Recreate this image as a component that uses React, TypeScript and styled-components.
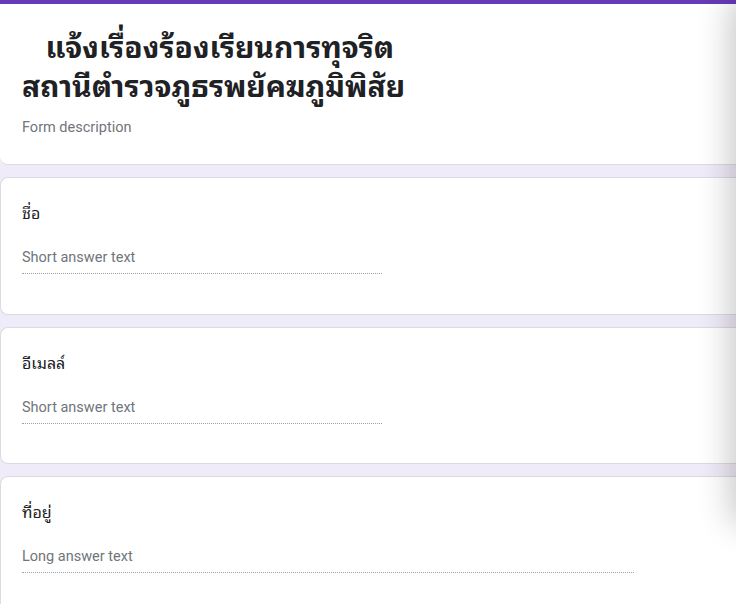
import React from "react";
import styled, { createGlobalStyle } from "styled-components";

const Global = createGlobalStyle`
  html, body {
    margin: 0;
    padding: 0;
    background: #f0ebf8;
    overflow: hidden;
  }
  body {
    font-family: Roboto, "Noto Sans Thai", "Noto Sans", "DejaVu Sans", sans-serif;
  }
`;

const thaiStack = `"Noto Sans Thai Looped", Loma, Garuda, "Noto Sans Thai", "Noto Sans", "DejaVu Sans", sans-serif`;

const Page = styled.div`
  position: relative;
  width: 736px;
  height: 604px;
  overflow: hidden;
  display: flex;
  flex-direction: column;
  gap: 12px;
`;

const Card = styled.section<{ $header?: boolean }>`
  width: 780px;
  box-sizing: border-box;
  background: #ffffff;
  border: 1px solid #dadce0;
  border-right: none;
  border-radius: 8px;
  ${(p) => (p.$header ? "border-top: 4px solid #673ab7; border-radius: 0 0 8px 8px; border-left: none;" : "")}
  padding: ${(p) => (p.$header ? "21px 22px 26px" : "22px 22px 39.5px 21px")};
  display: flex;
  flex-direction: column;
`;

const Title = styled.h1`
  margin: 0;
  font-family: ${thaiStack};
  font-size: 30px;
  font-weight: 700;
  line-height: 39px;
  color: #202124;
  white-space: pre-wrap;
`;

const Description = styled.div`
  margin-top: 15px;
  font-size: 14.5px;
  line-height: 20px;
  color: #70757a;
`;

const Label = styled.div`
  font-family: ${thaiStack};
  font-size: 16px;
  line-height: 24px;
  color: #202124;
`;

const Answer = styled.div<{ $width: number }>`
  margin-top: 24px;
  width: ${(p) => p.$width}px;
  font-size: 14.5px;
  line-height: 20px;
  color: #70757a;
  padding-bottom: 5px;
  border-bottom: 1px dotted #9aa0a6;
`;

const EdgeShadow = styled.div`
  position: absolute;
  top: 0;
  left: 736px;
  width: 40px;
  height: 520px;
  background: #fff;
  box-shadow: 0 0 34px 4px rgba(0, 0, 0, 0.24);
  border-radius: 8px;
`;

const questions = [
  { label: "ชื่อ", placeholder: "Short answer text", width: 360 },
  { label: "อีเมลล์", placeholder: "Short answer text", width: 360 },
  { label: "ที่อยู่", placeholder: "Long answer text", width: 612 },
];

export default function App() {
  return (
    <>
      <Global />
      <Page>
        <Card $header>
          <Title>{"   แจ้งเรื่องร้องเรียนการทุจริต\nสถานีตำรวจภูธรพยัคฆภูมิพิสัย"}</Title>
          <Description>Form description</Description>
        </Card>
        {questions.map((q) => (
          <Card key={q.label}>
            <Label>{q.label}</Label>
            <Answer $width={q.width}>{q.placeholder}</Answer>
          </Card>
        ))}
        <EdgeShadow />
      </Page>
    </>
  );
}
